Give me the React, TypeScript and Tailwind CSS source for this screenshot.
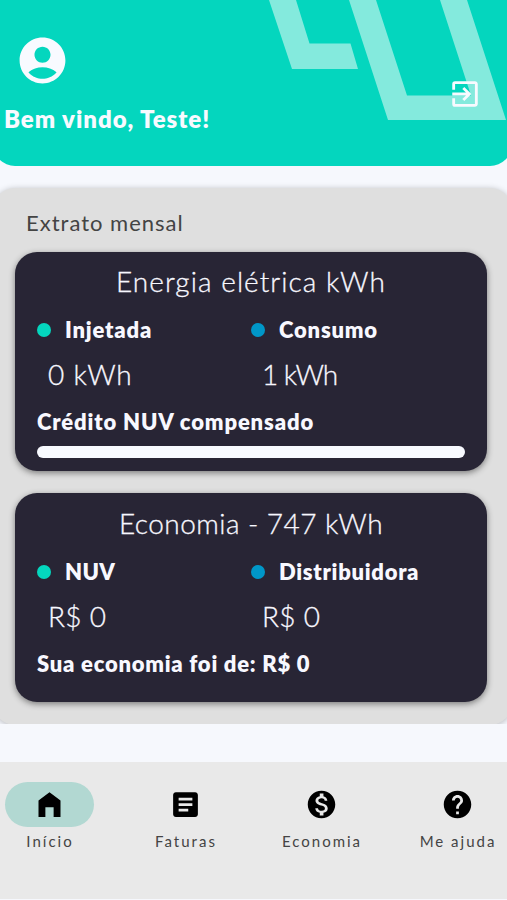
import React from "react";
import { MdAccountCircle, MdArticle, MdExitToApp, MdHelp, MdMonetizationOn } from "react-icons/md";

const HomeIcon: React.FC<{ className?: string }> = ({ className }) => (
  <svg viewBox="0 0 24 24" fill="currentColor" className={className}>
    <path d="M4 21V9l8-6 8 6v12h-5v-7H9v7z" />
  </svg>
);

const HeaderPattern: React.FC = () => (
  <svg viewBox="0 0 507 166" className="absolute left-0 top-0 h-[166px] w-[507px]" fill="#84eadd">
    <path d="M269 0H296L309.500 43.500H350.500L358 69H292Z" />
    <path d="M349 0H376L407 95.500H471L440 0H467L506 120H388Z" />
  </svg>
);

interface EntryProps {
  dot: "green" | "blue";
  label: string;
  labelClass: string;
  value: string;
  valueClass: string;
}

const Entry: React.FC<EntryProps> = ({ dot, label, labelClass, value, valueClass }) => (
  <div className="w-[214px] whitespace-nowrap">
    <div className="flex h-7 items-center">
      <span
        className={`mr-[14px] h-[14px] w-[14px] shrink-0 rounded-full ${
          dot === "green" ? "bg-[#04d6be]" : "bg-[#0097c8]"
        }`}
      />
      <span className={`text-[22px] font-extrabold leading-7 ${labelClass}`}>{label}</span>
    </div>
    <div
      className={`mt-3 pl-[11px] text-[28px] font-light leading-9 [-webkit-text-stroke:0.3px_currentColor] ${valueClass}`}
    >
      {value}
    </div>
  </div>
);

const navItems = [
  { label: "Início", icon: HomeIcon, active: true },
  { label: "Faturas", icon: MdArticle, active: false },
  { label: "Economia", icon: MdMonetizationOn, active: false },
  { label: "Me ajuda", icon: MdHelp, active: false },
];

export default function App() {
  return (
    <div className="flex h-[900px] w-[507px] flex-col overflow-hidden bg-[#f6f8fd] font-['Lato',sans-serif]">
      <header className="relative h-[166px] shrink-0">
        <div className="-ml-[7px] -mr-[5px] h-full rounded-b-[22px] bg-[#04d6be]" />
        <HeaderPattern />
        <div className="absolute inset-0 text-[#f8faff]">
          <MdAccountCircle className="ml-[15px] mt-[33px] h-[55px] w-[55px]" />
          <div className="ml-1 mt-[15px] whitespace-nowrap text-[24px] font-extrabold leading-8 tracking-[0.950px]">
            Bem vindo, Teste!
          </div>
          <MdExitToApp className="absolute left-[448px] top-[77px] h-[34px] w-[34px]" />
        </div>
      </header>

      <main className="h-[558px] shrink-0 overflow-hidden pt-[22px]">
        <section className="-ml-[7px] -mr-[5px] h-[537px] rounded-[22px] bg-[#dfdfdf] pl-[22px] pr-[25px] shadow-[0_1px_6px_rgba(0,0,0,0.25)]">
          <h2 className="pl-[11px] pt-[19px] text-[22px] leading-8 tracking-[1px] text-[#444]">Extrato mensal</h2>

          <div className="mt-[13px] h-[219px] rounded-[22px] bg-[#282535] px-[22px] pt-[11px] text-[#f8f8ff] shadow-[0_2px_6px_rgba(0,0,0,0.45)]">
            <h3 className="text-center text-[28px] font-light leading-9 tracking-[1.050px] [-webkit-text-stroke:0.3px_currentColor]">
              Energia elétrica kWh
            </h3>
            <div className="mt-[17px] flex">
              <Entry dot="green" label="Injetada" labelClass="tracking-[0.8px]" value="0 kWh" valueClass="tracking-[0.8px]" />
              <Entry dot="blue" label="Consumo" labelClass="tracking-[0.8px]" value="1 kWh" valueClass="tracking-[-1.1px]" />
            </div>
            <p className="mt-4 text-[22px] font-extrabold leading-7 tracking-[0.850px]">Crédito NUV compensado</p>
            <div className="mt-[10px] h-3 rounded-full bg-[#f8faff]" />
          </div>

          <div className="mt-[22px] h-[209px] rounded-[22px] bg-[#282535] px-[22px] pt-3 text-[#f8f8ff] shadow-[0_2px_6px_rgba(0,0,0,0.45)]">
            <h3 className="text-center text-[28px] font-light leading-9 tracking-[0.450px] [-webkit-text-stroke:0.3px_currentColor]">
              Economia - 747 kWh
            </h3>
            <div className="mt-[17px] flex">
              <Entry dot="green" label="NUV" labelClass="tracking-[0.3px]" value="R$ 0" valueClass="tracking-[0.3px]" />
              <Entry
                dot="blue"
                label="Distribuidora"
                labelClass="tracking-[0.7px]"
                value="R$ 0"
                valueClass="tracking-[0.3px]"
              />
            </div>
            <p className="mt-4 text-[22px] font-extrabold leading-7 tracking-[0.750px]">Sua economia foi de: R$ 0</p>
          </div>
        </section>
      </main>

      <nav className="mt-[38px] flex h-[137px] shrink-0 justify-between bg-[#e9e9e9] px-[5px] pt-5">
        {navItems.map(({ label, icon: Icon, active }) => (
          <div key={label} className="flex w-[89px] flex-col items-center">
            <div
              className={`flex h-[45px] w-[89px] items-center justify-center rounded-full ${
                active ? "bg-[#b2d8d2]" : ""
              }`}
            >
              <Icon className="h-[33px] w-[33px] text-black" />
            </div>
            <span className="mt-1 whitespace-nowrap pl-px text-[15px] leading-5 tracking-[2px] text-[#444]">{label}</span>
          </div>
        ))}
      </nav>
    </div>
  );
}
